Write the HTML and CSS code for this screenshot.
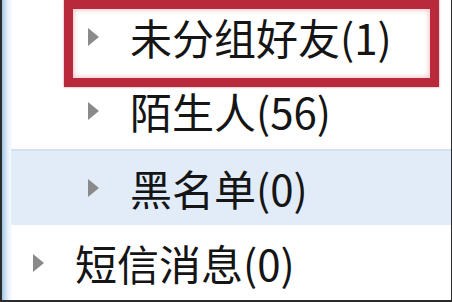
FILE: index.html
```html
<!DOCTYPE html>
<html lang="zh-CN">
<head>
<meta charset="utf-8">
<link rel="stylesheet" href="styles.css">
</head>
<body>
<div class="panel">
  <ul class="tree">
    <li class="row child first"><span class="arrow"></span><span class="label">未分组好友(1)</span></li>
    <li class="row child"><span class="arrow"></span><span class="label">陌生人(56)</span></li>
    <li class="row child selected"><span class="arrow"></span><span class="label">黑名单(0)</span></li>
    <li class="row top last"><span class="arrow"></span><span class="label">短信消息(0)</span></li>
  </ul>
  <div class="mark"></div>
</div>
</body>
</html>
```
FILE: styles.css
```css
html, body {
  margin: 0;
  padding: 0;
  background: #ffffff;
}
.panel {
  position: relative;
  width: 452px;
  height: 302px;
  box-sizing: border-box;
  border-left: 2px solid #2b2b2b;
  border-right: 1px solid #2b2b2b;
  border-bottom: 2px solid #2b2b2b;
  background: linear-gradient(to right, #9cc3e6 0px, #c9def2 3px, #eef5fc 7px, #ffffff 11px);
  overflow: hidden;
  font-family: "Noto Sans CJK SC", "Noto Sans", sans-serif;
}
.tree {
  list-style: none;
  margin: 0;
  padding: 0;
  display: flex;
  flex-direction: column;
}
.row {
  height: 76px;
  display: flex;
  align-items: center;
  box-sizing: border-box;
}
.row.first { height: 73px; }
.row.last { height: 75px; }
.row.child { padding-left: 86px; }
.row.top { padding-left: 31px; }
.row.selected {
  background: #e1ecf8;
  border-top: 2px solid #d3e1f0;
  margin-left: 9px;
  padding-left: 77px;
}
.arrow {
  width: 0;
  height: 0;
  border-left: 11px solid #8a8a8a;
  border-top: 9px solid transparent;
  border-bottom: 9px solid transparent;
  margin-right: 31px;
  flex: none;
}
.label {
  font-size: 42px;
  line-height: 1;
  color: #151515;
  white-space: nowrap;
}
.mark {
  position: absolute;
  left: 62px;
  top: 0;
  width: 375px;
  height: 87px;
  box-sizing: border-box;
  border: 9px solid #b82a3b;
  box-shadow: inset 0 0 5px 1px rgba(235, 140, 150, 0.55), 0 0 2px rgba(184, 42, 59, 0.6);
}
```
